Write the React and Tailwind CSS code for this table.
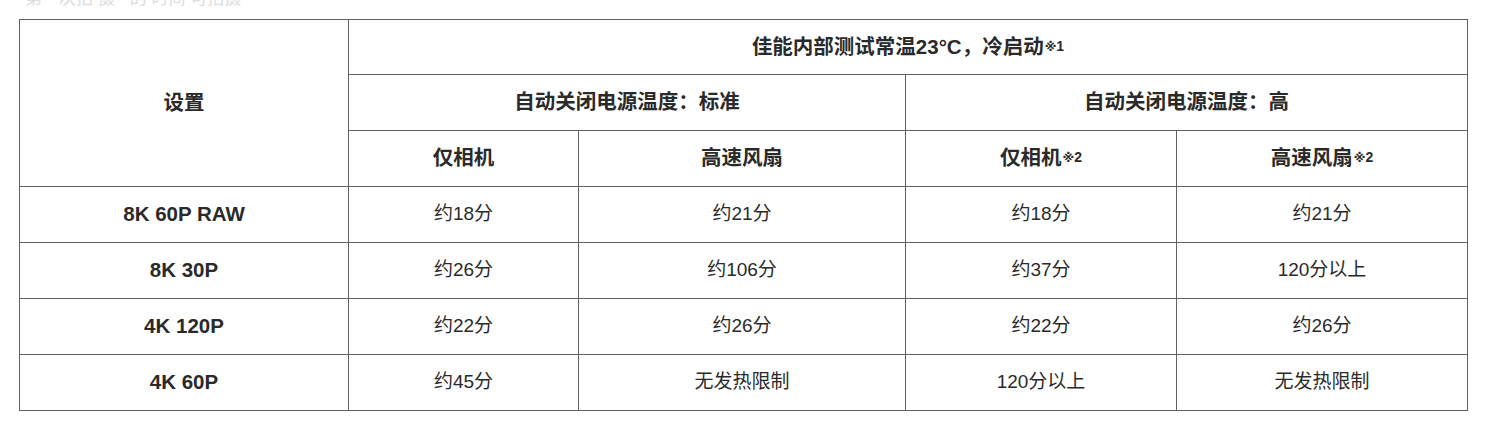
import React from "react";

const font = { fontFamily: '"Liberation Sans", "Noto Sans CJK SC", sans-serif' };

function Sup({ n }) {
  return (
    <sup className="text-[14px] font-bold relative -top-[3px] ml-[1px]">
      <span style={{ fontFamily: '"DejaVu Sans", "Noto Sans CJK SC", sans-serif' }} className="text-[12px]">※</span>{n}
    </sup>
  );
}

const rows = [
  ["8K 60P RAW", "约18分", "约21分", "约18分", "约21分"],
  ["8K 30P", "约26分", "约106分", "约37分", "120分以上"],
  ["4K 120P", "约22分", "约26分", "约22分", "约26分"],
  ["4K 60P", "约45分", "无发热限制", "120分以上", "无发热限制"],
];

export default function App() {
  const cell = "border border-[#616161] text-center align-middle p-0";
  const head = cell + " font-bold text-[20.5px]";
  return (
    <div className="bg-white w-[1494px] h-[427px] text-[#2a2a2a]" style={font}>
      <div className="h-[19px] pl-[25px] overflow-hidden">
        <div className="text-[17px] text-[#dcdcdc] leading-[18px] -mt-[10px] whitespace-nowrap">第一次拍 摄 · 的 时间 可拍摄</div>
      </div>
      <table className="ml-[19px] border-collapse table-fixed w-[1448px] text-[19px]">
        <colgroup>
          <col className="w-[329px]" />
          <col className="w-[230px]" />
          <col className="w-[327px]" />
          <col className="w-[271px]" />
          <col className="w-[291px]" />
        </colgroup>
        <thead>
          <tr className="h-[55px]">
            <th rowSpan={3} className={head}>设置</th>
            <th colSpan={4} className={head}>
              佳能内部测试常温23°C，冷启动<Sup n={1} />
            </th>
          </tr>
          <tr className="h-[56px]">
            <th colSpan={2} className={head}>自动关闭电源温度：标准</th>
            <th colSpan={2} className={head}>自动关闭电源温度：高</th>
          </tr>
          <tr className="h-[56px]">
            <th className={head}>仅相机</th>
            <th className={head}>高速风扇</th>
            <th className={head}>仅相机<Sup n={2} /></th>
            <th className={head}>高速风扇<Sup n={2} /></th>
          </tr>
        </thead>
        <tbody>
          {rows.map((r, i) => (
            <tr key={i} className="h-[56px]">
              {r.map((c, j) => (
                <td key={j} className={j === 0 ? head : cell + " font-normal"}>{c}</td>
              ))}
            </tr>
          ))}
        </tbody>
      </table>
    </div>
  );
}
